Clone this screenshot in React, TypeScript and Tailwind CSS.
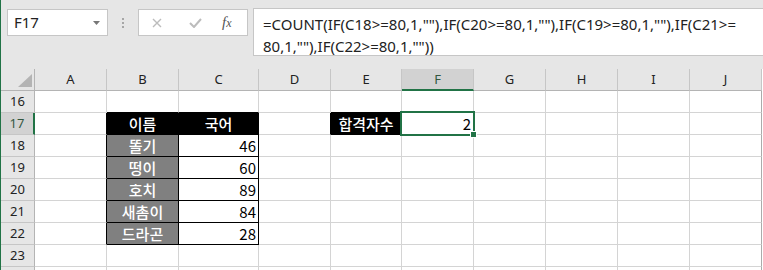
const COLS = ['A', 'B', 'C', 'D', 'E', 'F', 'G', 'H', 'I', 'J'];
const ROWS = [16, 17, 18, 19, 20, 21, 22, 23, 24];

type CellData = { text?: string; kind?: 'head' | 'name' | 'num' | 'sel' };

const CELLS: Record<string, CellData> = {
    B17: { text: '이름', kind: 'head' },
    C17: { text: '국어', kind: 'head' },
    E17: { text: '합격자수', kind: 'head' },
    F17: { text: '2', kind: 'sel' },
    B18: { text: '똘기', kind: 'name' },
    C18: { text: '46', kind: 'num' },
    B19: { text: '떵이', kind: 'name' },
    C19: { text: '60', kind: 'num' },
    B20: { text: '호치', kind: 'name' },
    C20: { text: '89', kind: 'num' },
    B21: { text: '새촘이', kind: 'name' },
    C21: { text: '84', kind: 'num' },
    B22: { text: '드라곤', kind: 'name' },
    C22: { text: '28', kind: 'num' },
};

const RIGHT_BLACK = new Set(['A17', 'A18', 'A19', 'A20', 'A21', 'A22', 'B17', 'B18', 'B19', 'B20', 'B21', 'B22', 'C17', 'C18', 'C19', 'C20', 'C21', 'C22', 'D17', 'E17']);
const BOTTOM_BLACK = new Set(['B16', 'C16', 'E16', 'B17', 'B18', 'B19', 'B20', 'B21', 'B22', 'C17', 'C18', 'C19', 'C20', 'C21', 'C22', 'E17']);

function Cell({ id }: { id: string }) {
    const data = CELLS[id] ?? {};
    const right = RIGHT_BLACK.has(id) ? 'border-r-black' : id[0] === 'J' ? 'border-r-[#ababab]' : 'border-r-[#d4d4d4]';
    const bottom = BOTTOM_BLACK.has(id) ? 'border-b-black' : 'border-b-[#d4d4d4]';

    let look = 'bg-white';
    if (data.kind === 'head') look = 'bg-black text-white justify-center font-medium';
    if (data.kind === 'name') look = 'bg-[#808080] text-white justify-center font-medium';
    if (data.kind === 'num' || data.kind === 'sel') look = 'bg-white text-black justify-end pr-[2px]';

    return (
        <div className={`relative h-[22px] border-r border-b flex items-center text-[15px] leading-none ${right} ${bottom} ${look}`}>
            {data.text && <span className="pb-[1px]">{data.text}</span>}
            {data.kind === 'sel' && (
                <>
                    <div className="absolute -left-[2px] -top-[2px] w-[75px] h-[25px] border-2 border-[#217346] z-10" />
                    <div className="absolute left-[68px] top-[18px] w-[7px] h-[7px] bg-[#217346] border border-white z-20" />
                </>
            )}
        </div>
    );
}

export default function App() {
    return (
        <div className="w-[763px] h-[270px] overflow-hidden flex bg-[#e6e6e6] font-['Noto_Sans_CJK_KR','Noto_Sans',sans-serif] text-[#222]">
            <div className="w-px shrink-0 bg-[#217346]" />
            <div className="flex-1 flex flex-col min-w-0">
                {/* formula bar */}
                <div className="h-[69px] shrink-0 flex items-start pt-[9px] pl-[6px] gap-0">
                    <div className="w-[101px] h-[27px] bg-white border border-[#c6c6c6] flex items-center justify-between pl-[6px] pr-[7px]">
                        <span className="font-['Noto_Sans',sans-serif] text-[15px] leading-none text-[#222]">F17</span>
                        <svg width="7" height="4" viewBox="0 0 7 4"><path d="M0 0h7L3.5 4z" fill="#777" /></svg>
                    </div>
                    <div className="w-[30px] h-[27px] flex flex-col items-center justify-center gap-[2px]">
                        <div className="w-[2px] h-[2px] bg-[#a6a6a6]" />
                        <div className="w-[2px] h-[2px] bg-[#a6a6a6]" />
                        <div className="w-[2px] h-[2px] bg-[#a6a6a6]" />
                    </div>
                    <div className="w-[110px] h-[27px] bg-white border border-[#c6c6c6] flex items-center pl-[13px]">
                        <svg width="10" height="10" viewBox="0 0 10 10" className="shrink-0">
                            <path d="M1 1l8 8M9 1l-8 8" stroke="#bcbcbc" strokeWidth="1.4" />
                        </svg>
                        <svg width="13" height="10" viewBox="0 0 13 10" className="ml-[27px] shrink-0">
                            <path d="M1 5l4 4 7-8" stroke="#bcbcbc" strokeWidth="2" fill="none" />
                        </svg>
                        <span className="ml-[20px] font-['Liberation_Serif',serif] italic text-[15px] leading-none text-[#555]">
                            f<span className="text-[12px]">x</span>
                        </span>
                    </div>
                    <div className="ml-[5px] flex-1 h-[48px] -mt-px bg-white border border-[#c6c6c6] border-r-0 pl-[9px] pt-[4px] text-[15px] leading-[22px] text-[#222] whitespace-nowrap font-['Noto_Sans',sans-serif]">
                        <div>=COUNT(IF(C18&gt;=80,1,""),IF(C20&gt;=80,1,""),IF(C19&gt;=80,1,""),IF(C21&gt;=</div>
                        <div>80,1,""),IF(C22&gt;=80,1,""))</div>
                    </div>
                </div>

                {/* sheet */}
                <div className="grid grid-cols-[34px_72px_72px_80px_72px_71px_72px_72px_72px_72px_72px] bg-white">
                    <div className="h-[22px] bg-[#e6e6e6] border-r border-b border-[#b4b4b4] flex items-end justify-end pr-[2px] pb-[3px]">
                        <svg width="14" height="13" viewBox="0 0 14 13"><path d="M14 0v13H0z" fill="#b4b4b4" /></svg>
                    </div>
                    {COLS.map((c) => (
                        <div
                            key={c}
                            className={
                                c === 'F'
                                    ? 'h-[22px] bg-[#d2d2d2] border-r border-r-[#c6c6c6] border-b-2 border-b-[#217346] flex items-center justify-center text-[13px] leading-none text-[#33573f] font-["Noto_Sans",sans-serif]'
                                    : 'h-[22px] bg-[#e6e6e6] border-r border-r-[#c6c6c6] border-b border-b-[#b4b4b4] flex items-center justify-center text-[13px] leading-none text-[#222] font-["Noto_Sans",sans-serif]'
                            }
                        >
                            {c}
                        </div>
                    ))}
                    {ROWS.map((r) => (
                        <div key={r} className="contents">
                            <div
                                className={
                                    r === 17
                                        ? 'h-[22px] bg-[#d2d2d2] border-b border-b-[#c6c6c6] border-r-2 border-r-[#217346] flex items-center justify-center text-[13px] leading-none text-[#33573f] font-["Noto_Sans",sans-serif]'
                                        : 'h-[22px] bg-[#e6e6e6] border-b border-b-[#c6c6c6] border-r border-r-[#b4b4b4] flex items-center justify-center text-[13px] leading-none text-[#222] font-["Noto_Sans",sans-serif]'
                                }
                            >
                                {r < 24 ? r : ''}
                            </div>
                            {COLS.map((c) => (
                                <Cell key={c} id={`${c}${r}`} />
                            ))}
                        </div>
                    ))}
                </div>
            </div>
        </div>
    );
}
